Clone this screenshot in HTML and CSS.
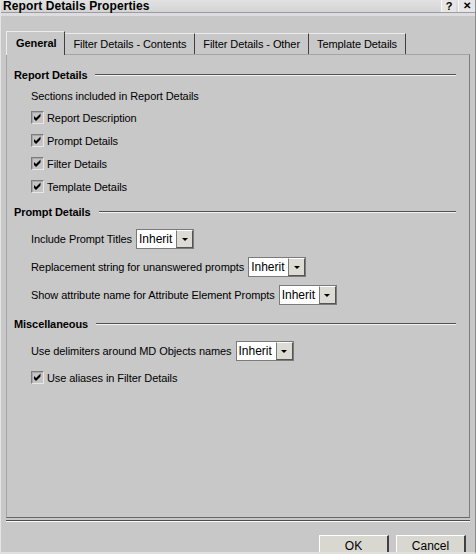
FILE: index.html
```
<!DOCTYPE html>
<html>
<head>
<meta charset="utf-8">
<link rel="stylesheet" href="styles.css">
</head>
<body>
<div class="window">
  <div class="titlebar">
    <span class="title">Report Details Properties</span>
    <div class="title-btns">
      <span class="tbtn">?</span>
      <span class="tbtn close">✕</span>
    </div>
  </div>
  <div class="title-strip"></div>
  <div class="content">
    <div class="tabs">
      <div class="tab active">General</div>
      <div class="tab">Filter Details - Contents</div>
      <div class="tab">Filter Details - Other</div>
      <div class="tab">Template Details</div>
    </div>
    <div class="panel">
      <div class="section">
        <div class="section-title"><span>Report Details</span><span class="rule"></span></div>
        <div class="section-body">
          <div class="text-row">Sections included in Report Details</div>
          <div class="check-row"><span class="checkbox"><svg viewBox="0 0 13 13" width="13" height="13"><path d="M3 5 L5 7 L9.5 2.5 L9.5 5.5 L5 10 L3 8 Z" fill="#000"/></svg></span>Report Description</div>
          <div class="check-row"><span class="checkbox"><svg viewBox="0 0 13 13" width="13" height="13"><path d="M3 5 L5 7 L9.5 2.5 L9.5 5.5 L5 10 L3 8 Z" fill="#000"/></svg></span>Prompt Details</div>
          <div class="check-row"><span class="checkbox"><svg viewBox="0 0 13 13" width="13" height="13"><path d="M3 5 L5 7 L9.5 2.5 L9.5 5.5 L5 10 L3 8 Z" fill="#000"/></svg></span>Filter Details</div>
          <div class="check-row"><span class="checkbox"><svg viewBox="0 0 13 13" width="13" height="13"><path d="M3 5 L5 7 L9.5 2.5 L9.5 5.5 L5 10 L3 8 Z" fill="#000"/></svg></span>Template Details</div>
        </div>
      </div>
      <div class="section second">
        <div class="section-title"><span>Prompt Details</span><span class="rule"></span></div>
        <div class="section-body">
          <div class="field-row">Include Prompt Titles <span class="select"><span class="select-value">Inherit</span><span class="select-btn"><span class="arrow"></span></span></span></div>
          <div class="field-row">Replacement string for unanswered prompts <span class="select"><span class="select-value">Inherit</span><span class="select-btn"><span class="arrow"></span></span></span></div>
          <div class="field-row">Show attribute name for Attribute Element Prompts <span class="select"><span class="select-value">Inherit</span><span class="select-btn"><span class="arrow"></span></span></span></div>
        </div>
      </div>
      <div class="section third">
        <div class="section-title"><span>Miscellaneous</span><span class="rule"></span></div>
        <div class="section-body">
          <div class="field-row">Use delimiters around MD Objects names <span class="select"><span class="select-value">Inherit</span><span class="select-btn"><span class="arrow"></span></span></span></div>
          <div class="check-row after-field"><span class="checkbox"><svg viewBox="0 0 13 13" width="13" height="13"><path d="M3 5 L5 7 L9.5 2.5 L9.5 5.5 L5 10 L3 8 Z" fill="#000"/></svg></span>Use aliases in Filter Details</div>
        </div>
      </div>
    </div>
    <div class="separator"></div>
    <div class="buttons">
      <div class="button">OK</div>
      <div class="button">Cancel</div>
    </div>
  </div>
</div>
</body>
</html>
```
FILE: styles.css
```
html, body {
  margin: 0;
  padding: 0;
}
body {
  width: 476px;
  height: 554px;
  overflow: hidden;
  background: #c8c8c8;
  font-family: "Liberation Sans", Arial, sans-serif;
  font-size: 11px;
  letter-spacing: -0.08px;
  color: #000;
}
.window {
  width: 476px;
  height: 554px;
  box-sizing: border-box;
  border-left: 1px solid #e4e4e4;
  border-right: 1px solid #8c8c8c;
  border-bottom: 2px solid #e0e0dc;
  background: #c8c8c8;
  overflow: hidden;
}
.titlebar {
  height: 12px;
  background: linear-gradient(#e2e2e2, #d4d4d4);
  border-bottom: 1px solid #9c9c9c;
  display: flex;
  align-items: center;
  justify-content: space-between;
}
.title {
  font-weight: bold;
  font-size: 12px;
  padding-left: 2px;
  line-height: 12px;
  letter-spacing: 0.1px;
}
.title-btns {
  display: flex;
  height: 12px;
  gap: 2px;
}
.tbtn {
  width: 14px;
  height: 12px;
  background: #e6e6e6;
  border-left: 1px solid #f8f8f8;
  font-weight: bold;
  font-size: 11px;
  line-height: 12px;
  text-align: center;
}
.tbtn.close {
  width: 16px;
  font-size: 10px;
}
.title-strip {
  height: 3px;
  background: #dcdce2;
}
.content {
  padding: 0 5px 0 5px;
}
.tabs {
  display: flex;
  align-items: flex-end;
  margin-top: 15px;
  height: 23px;
  position: relative;
  z-index: 1;
}
.tab {
  height: 21px;
  line-height: 20px;
  padding: 0 8px;
  border-top: 1px solid #ececec;
  border-left: 1px solid #ececec;
  border-right: 1px solid #404040;
  box-sizing: border-box;
  white-space: nowrap;
}
.tab + .tab {
  border-left: none;
}
.tab.active {
  height: 24px;
  margin-bottom: -1px;
  background: #c8c8c8;
  font-weight: bold;
  padding: 0 8px 0 9px;
  line-height: 22px;
}
.panel {
  height: 464px;
  box-sizing: border-box;
  border-top: 1px solid #a4a4a4;
  border-left: 1px solid #a4a4a4;
  border-right: 1px solid #7c7c7c;
  border-bottom: 1px solid #666;
  padding: 10px 13px 0 7px;
}
.section-title {
  height: 20px;
  display: flex;
  align-items: center;
  font-weight: bold;
}
.rule {
  flex: 1;
  margin-left: 8px;
  border-top: 1px solid #505050;
  border-bottom: 1px solid #f4f4f4;
  height: 0;
}
.section-body {
  padding-left: 17px;
}
.text-row {
  height: 20px;
  line-height: 20px;
  margin-top: 1px;
}
.check-row {
  height: 23px;
  display: flex;
  align-items: center;
}
.check-row.after-field {
  margin-top: 5px;
}
.checkbox {
  width: 13px;
  height: 13px;
  margin-right: 3px;
  box-sizing: border-box;
  background: #c4c4c4;
  border-top: 1px solid #7c7c7c;
  border-left: 1px solid #7c7c7c;
  border-right: 1px solid #e8e8e8;
  border-bottom: 1px solid #e8e8e8;
  box-shadow: inset 1px 1px 0 #a8a8a8;
  position: relative;
  display: inline-block;
}
.checkbox svg {
  position: absolute;
  left: -1px;
  top: -1px;
}
.section.second {
  margin-top: 4px;
}
.section.third {
  margin-top: 9px;
}
.field-row {
  height: 20px;
  display: flex;
  align-items: center;
  margin-top: 8px;
  white-space: pre;
}
.field-row:first-child {
  margin-top: 7px;
}
.select {
  display: inline-flex;
  height: 20px;
  box-sizing: border-box;
  border: 1px solid #7a7a7a;
  background: #fff;
  margin-left: 1px;
}
.select-value {
  width: 39px;
  padding-left: 2px;
  box-sizing: border-box;
  line-height: 18px;
  font-size: 12px;
  letter-spacing: 0;
}
.select-btn {
  width: 17px;
  height: 18px;
  box-sizing: border-box;
  background: #dcdcd4;
  border-left: 1px solid #7a7a7a;
  border-right: 1px solid #555;
  border-bottom: 1px solid #555;
  border-top: 1px solid #fff;
  display: flex;
  align-items: center;
  justify-content: center;
}
.arrow {
  width: 0;
  height: 0;
  border-left: 3px solid transparent;
  border-right: 3px solid transparent;
  border-top: 3px solid #000;
}
.separator {
  margin-top: 2px;
  height: 0;
  border-top: 1px solid #4c4c4c;
  border-bottom: 1px solid #fafafa;
}
.buttons {
  display: flex;
  justify-content: flex-end;
  gap: 7px;
  margin-top: 13px;
  padding-right: 4px;
}
.button {
  width: 70px;
  height: 22px;
  box-sizing: border-box;
  background: #d8d8d0;
  border-top: 1px solid #fff;
  border-left: 1px solid #fff;
  border-right: 2px solid #404040;
  text-align: center;
  line-height: 20px;
  font-size: 12px;
  letter-spacing: 0;
}
```
